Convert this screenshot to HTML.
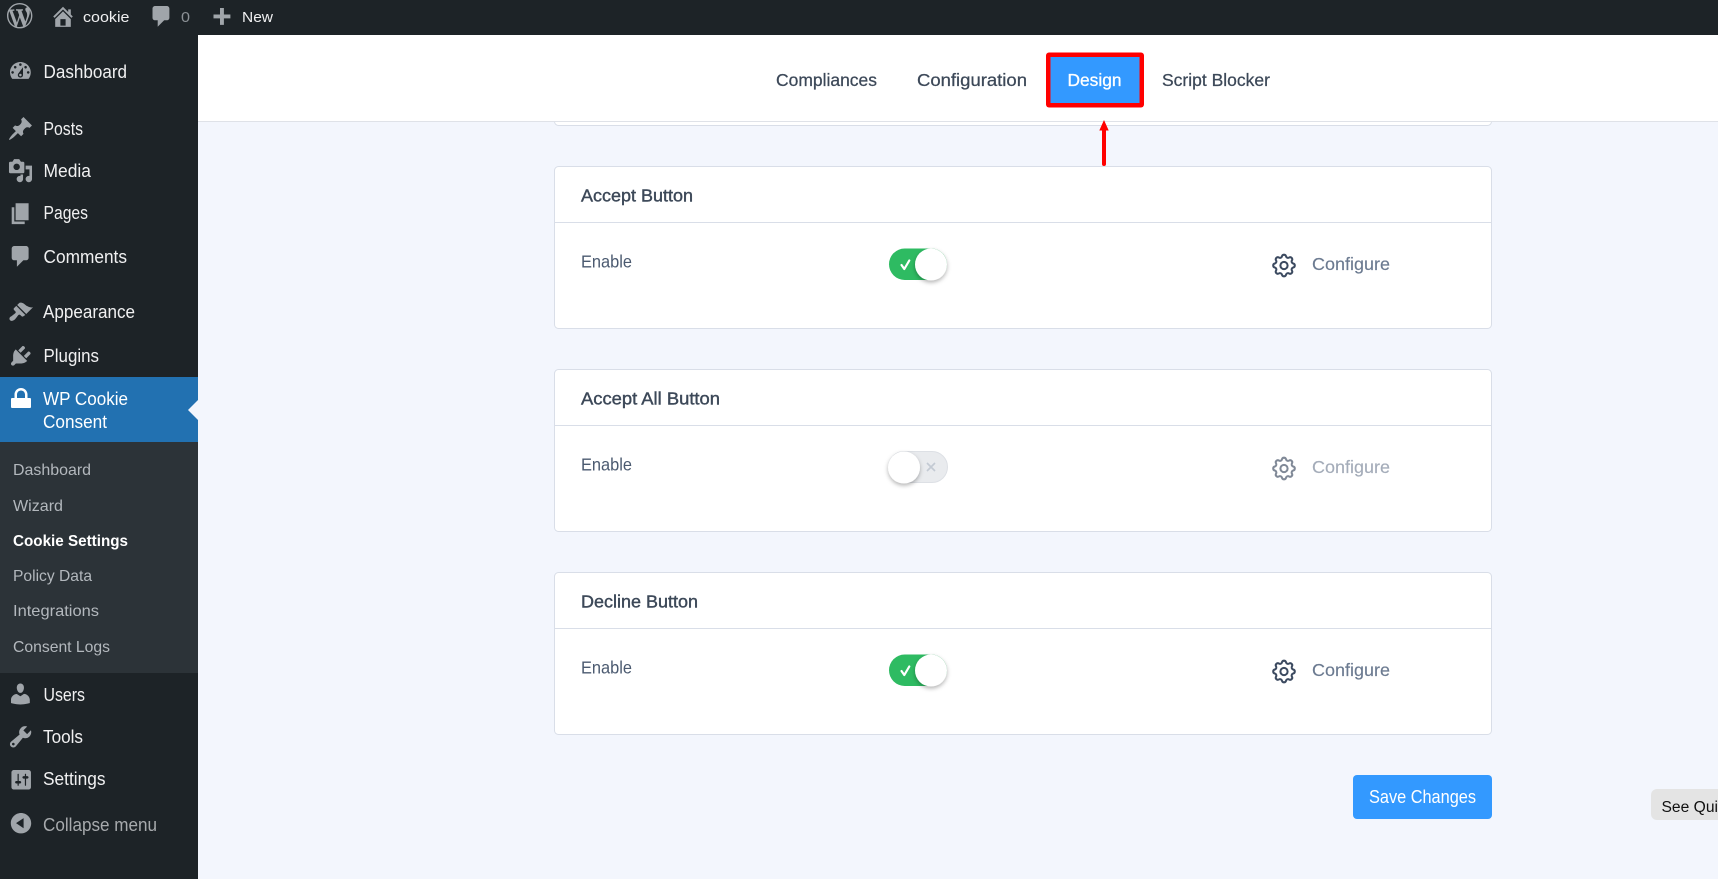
<!DOCTYPE html>
<html><head><meta charset="utf-8"><title>Cookie Settings</title>
<style>
html,body{margin:0;padding:0;width:1718px;height:879px;overflow:hidden;background:#f3f6fd}
svg{display:block}
text{font-family:"Liberation Sans",Arial,sans-serif;white-space:pre}
.a{font-size:18px;fill:#f0f0f1}
.b{font-size:15px;fill:#f0f0f1}
.s{font-size:16px;fill:#b3b8bd}
.n{font-size:17.5px;fill:#3c4858;stroke:#3c4858;stroke-width:.25}
.t{font-size:17.5px;fill:#3c4858;stroke:#3c4858;stroke-width:.4}
.e{font-size:17.5px;fill:#4b5a70}
.c{font-size:17.5px;fill:#6b7a90;stroke:#6b7a90;stroke-width:.15}
.i{fill:#a0a5aa;fill-rule:evenodd}
.card{fill:#fff;stroke:#d9dee8;stroke-width:1}
.ln{stroke:#d9dee8;stroke-width:1}
.gear{fill:none;stroke:#3c4a60;stroke-width:1.7;stroke-linecap:round;stroke-linejoin:round}
</style></head><body>
<svg width="1718" height="879" viewBox="0 0 1718 879" xmlns="http://www.w3.org/2000/svg">
<defs>
<filter id="sh" x="-50%" y="-50%" width="200%" height="200%"><feDropShadow dx="0" dy="2" stdDeviation="2.2" flood-color="#000" flood-opacity=".3"/></filter>
<path id="gearp" d="M10.325 4.317c.426-1.756 2.924-1.756 3.35 0a1.724 1.724 0 002.573 1.066c1.543-.94 3.31.826 2.37 2.37a1.724 1.724 0 001.065 2.572c1.756.426 1.756 2.924 0 3.35a1.724 1.724 0 00-1.066 2.573c.94 1.543-.826 3.31-2.37 2.37a1.724 1.724 0 00-2.572 1.065c-.426 1.756-2.924 1.756-3.35 0a1.724 1.724 0 00-2.573-1.066c-1.543.94-3.31-.826-2.37-2.37a1.724 1.724 0 00-1.065-2.572c-1.756-.426-1.756-2.924 0-3.35a1.724 1.724 0 001.066-2.573c-.94-1.543.826-3.31 2.37-2.37.996.608 2.296.07 2.572-1.065zM15 12a3 3 0 11-6 0 3 3 0 016 0z"/>
</defs>
<rect width="1718" height="879" fill="#f3f6fd"/>

<!-- top card remainder -->
<rect class="card" x="554.5" y="100" width="937" height="25.5" rx="4"/>

<!-- nav -->
<rect x="198" y="35" width="1520" height="86" fill="#fff"/>
<line x1="198" x2="1718" y1="121.5" y2="121.5" stroke="#dfe2e8"/>
<text class="n" x="776" y="86" textLength="101" lengthAdjust="spacingAndGlyphs">Compliances</text>
<text class="n" x="917" y="86" textLength="110" lengthAdjust="spacingAndGlyphs">Configuration</text>
<rect x="1046" y="52.5" width="98" height="55" rx="3" fill="#f00"/>
<rect x="1050.5" y="57" width="89" height="46" fill="#3399ff"/>
<text x="1067.5" y="86" font-size="17.5" fill="#fff" stroke="#fff" stroke-width=".3" textLength="54" lengthAdjust="spacingAndGlyphs">Design</text>
<text class="n" x="1162" y="86" textLength="108" lengthAdjust="spacingAndGlyphs">Script Blocker</text>

<!-- arrow -->
<path d="M1104 120l4.7 10.5h-2.7v33.500a2 2 0 01-4 0v-33.500h-2.700z" fill="#f00"/>

<!-- cards -->
<rect class="card" x="554.5" y="166.5" width="937" height="162" rx="4"/>
<line class="ln" x1="555" x2="1491" y1="222.5" y2="222.5"/>
<text class="t" x="581" y="201.5" textLength="112" lengthAdjust="spacingAndGlyphs">Accept Button</text>
<text class="e" x="581" y="267.500" textLength="51" lengthAdjust="spacingAndGlyphs">Enable</text>
<rect x="889" y="248.5" width="58" height="31.5" rx="15.7" fill="#2ebb62"/>
<path d="M901.5 265l2.800 4 5-8.500" fill="none" stroke="#fff" stroke-width="2.200" stroke-linecap="round" stroke-linejoin="round"/>
<circle cx="931" cy="264.5" r="16" fill="#fff" filter="url(#sh)"/>
<use href="#gearp" class="gear" transform="translate(1269.6 251.1) scale(1.2)"/>
<text class="c" x="1312" y="270" textLength="78" lengthAdjust="spacingAndGlyphs">Configure</text>

<rect class="card" x="554.5" y="369.5" width="937" height="162" rx="4"/>
<line class="ln" x1="555" x2="1491" y1="425.5" y2="425.5"/>
<text class="t" x="581" y="404.5" textLength="139" lengthAdjust="spacingAndGlyphs">Accept All Button</text>
<text class="e" x="581" y="470.5" textLength="51" lengthAdjust="spacingAndGlyphs">Enable</text>
<rect x="888.5" y="451.5" width="59" height="31" rx="15.5" fill="#e9ebee" stroke="#dde0e5"/>
<path d="M927 463l8 8M935 463l-8 8" fill="none" stroke="#c3cad3" stroke-width="1.6"/>
<circle cx="904" cy="467.5" r="16" fill="#fff" filter="url(#sh)"/>
<use href="#gearp" class="gear" opacity=".65" transform="translate(1269.6 454.1) scale(1.2)"/>
<text x="1312" y="473" font-size="17.5" fill="#a4acb9" stroke="#a4acb9" stroke-width=".15" textLength="78" lengthAdjust="spacingAndGlyphs">Configure</text>

<rect class="card" x="554.5" y="572.5" width="937" height="162" rx="4"/>
<line class="ln" x1="555" x2="1491" y1="628.5" y2="628.5"/>
<text class="t" x="581" y="607.5" textLength="117" lengthAdjust="spacingAndGlyphs">Decline Button</text>
<text class="e" x="581" y="673.5" textLength="51" lengthAdjust="spacingAndGlyphs">Enable</text>
<rect x="889" y="654.5" width="58" height="31.5" rx="15.7" fill="#2ebb62"/>
<path d="M901.5 671l2.800 4 5-8.500" fill="none" stroke="#fff" stroke-width="2.200" stroke-linecap="round" stroke-linejoin="round"/>
<circle cx="931" cy="670.5" r="16" fill="#fff" filter="url(#sh)"/>
<use href="#gearp" class="gear" transform="translate(1269.6 657.1) scale(1.2)"/>
<text class="c" x="1312" y="676" textLength="78" lengthAdjust="spacingAndGlyphs">Configure</text>

<!-- save -->
<rect x="1353" y="775" width="139" height="44" rx="4" fill="#3399ff"/>
<text x="1369" y="803" font-size="18" fill="#fff" textLength="107" lengthAdjust="spacingAndGlyphs">Save Changes</text>
<path d="M1718 789h-61a6 6 0 00-6 6v19a6 6 0 006 6h61z" fill="#e4e4e4"/>
<text x="1661.500" y="812" font-size="15.500" fill="#111" textLength="56.500" lengthAdjust="spacingAndGlyphs">See Qui</text>

<!-- sidebar -->
<rect x="0" y="0" width="198" height="879" fill="#1d2327"/>
<rect x="0" y="377" width="198" height="65" fill="#2271b1"/>
<rect x="0" y="442" width="198" height="231" fill="#2c3338"/>
<path d="M198 400l-10 10 10 10z" fill="#f3f6fd"/>

<!-- topbar -->
<rect x="0" y="0" width="1718" height="35" fill="#1d2327"/>
<path class="i" transform="translate(7 3) scale(1.27)" d="M20 10c0-5.51-4.49-10-10-10C4.48 0 0 4.49 0 10c0 5.52 4.48 10 10 10 5.51 0 10-4.48 10-10zM7.78 15.37L4.37 6.22c.55-.02 1.17-.08 1.17-.08.5-.06.44-1.13-.06-1.11 0 0-1.45.11-2.37.11-.18 0-.37 0-.58-.01C4.12 2.69 6.87 1.11 10 1.11c2.33 0 4.45.87 6.05 2.34-.68-.11-1.65.39-1.65 1.58 0 .74.45 1.36.9 2.1.35.61.55 1.36.55 2.46 0 1.49-1.4 5-1.4 5l-3.03-8.37c.54-.02.82-.17.82-.17.5-.05.44-1.25-.06-1.22 0 0-1.44.12-2.38.12-.87 0-2.33-.12-2.33-.12-.5-.03-.56 1.2-.06 1.22l.92.08 1.26 3.41zM17.41 10c.24-.64.74-1.87.43-4.25.7 1.29 1.05 2.71 1.05 4.25 0 3.29-1.73 6.24-4.4 7.78.97-2.59 1.94-5.2 2.92-7.78zM6.1 18.09C3.12 16.65 1.11 13.53 1.11 10c0-1.3.23-2.48.72-3.59C3.25 10.3 4.67 14.2 6.1 18.09zm4.03-6.63l2.58 6.98c-.86.29-1.76.45-2.71.45-.79 0-1.57-.11-2.29-.33.81-2.38 1.62-4.74 2.42-7.1z"/>
<path class="i" transform="translate(50 3.5) scale(1.3)" d="M16 8.5l1.53 1.53-1.06 1.06L10 4.62l-6.47 6.47-1.06-1.06L10 2.5l4 4v-2h2v4zm-6-2.46l6 5.99V18H4v-5.97zM12 17v-5H8v5h4z"/>
<text class="b" x="83" y="22" textLength="46.5" lengthAdjust="spacingAndGlyphs">cookie</text>
<path class="i" transform="translate(148.6 3.4) scale(1.3)" d="M5 2h9c1.1 0 2 .9 2 2v7c0 1.1-.9 2-2 2h-2l-5 5v-5H5c-1.1 0-2-.9-2-2V4c0-1.1.9-2 2-2z"/>
<text x="181" y="22" font-size="15" fill="#8c9196" textLength="9" lengthAdjust="spacingAndGlyphs">0</text>
<path class="i" transform="translate(208.3 5.4) scale(1.3)" d="M17 7v3h-5v5H9v-5H4V7h5V2h3v5h5z"/>
<text class="b" x="242" y="22" textLength="31" lengthAdjust="spacingAndGlyphs">New</text>

<!-- menu -->
<path class="i" transform="translate(7.4 58.1) scale(1.3)" d="M3.76 16h12.48c1.1-1.37 1.76-3.11 1.76-5 0-4.42-3.58-8-8-8s-8 3.58-8 8c0 1.89.66 3.63 1.76 5zM10 4c.55 0 1 .45 1 1s-.45 1-1 1-1-.45-1-1 .45-1 1-1zM6 6c.55 0 1 .45 1 1s-.45 1-1 1-1-.45-1-1 .45-1 1-1zm8 0c.55 0 1 .45 1 1s-.45 1-1 1-1-.45-1-1 .45-1 1-1zm-5.37 5.55L12 7v6c0 1.1-.9 2-2 2s-2-.9-2-2c0-.57.24-1.08.63-1.45zM4 10c.55 0 1 .45 1 1s-.45 1-1 1-1-.45-1-1 .45-1 1-1zm12 0c.55 0 1 .45 1 1s-.45 1-1 1-1-.45-1-1 .45-1 1-1zm-5 3c0-.55-.45-1-1-1s-1 .45-1 1 .45 1 1 1 1-.45 1-1z"/>
<text class="a" x="43.5" y="78" textLength="83.5" lengthAdjust="spacingAndGlyphs">Dashboard</text>
<path class="i" transform="translate(7.2 115.4) scale(1.33)" d="M10.44 3.02l1.82-1.82 6.36 6.35-1.83 1.82c-1.05-.68-2.48-.57-3.41.36l-.75.75c-.92.93-1.04 2.35-.35 3.41l-1.83 1.82-2.41-2.41-2.8 2.79c-.42.42-3.38 2.71-3.8 2.29s1.86-3.39 2.28-3.81l2.79-2.79L4.1 9.36l1.83-1.82c1.05.69 2.48.57 3.4-.36l.75-.75c.93-.92 1.05-2.35.36-3.41z"/>
<text class="a" x="43.5" y="135" textLength="39.5" lengthAdjust="spacingAndGlyphs">Posts</text>
<path class="i" transform="translate(7.7 157.9) scale(1.28)" d="M13 11V4c0-.55-.45-1-1-1h-1.67L9 1H5L3.67 3H2c-.55 0-1 .45-1 1v7c0 .55.45 1 1 1h10c.55 0 1-.45 1-1zM7 4.5c1.38 0 2.5 1.12 2.5 2.5S8.38 9.5 7 9.5 4.5 8.38 4.5 7 5.62 4.5 7 4.5zM14 6h5v10.5c0 1.38-1.12 2.5-2.5 2.5S14 17.88 14 16.5s1.12-2.5 2.5-2.5c.17 0 .34.02.5.05V9h-3V6zm-4 8.05V13h2v3.5c0 1.38-1.12 2.5-2.5 2.5S7 17.88 7 16.5 8.12 14 9.5 14c.17 0 .34.02.5.05z"/>
<text class="a" x="43.5" y="177" textLength="47.5" lengthAdjust="spacingAndGlyphs">Media</text>
<path class="i" transform="translate(7.8 200.7) scale(1.3)" d="M6 15V2h10v13H6zm-1 1h8v2H3V5h2v11z"/>
<text class="a" x="43.5" y="219" textLength="44.5" lengthAdjust="spacingAndGlyphs">Pages</text>
<path class="i" transform="translate(7.8 243.4) scale(1.3)" d="M5 2h9c1.1 0 2 .9 2 2v7c0 1.1-.9 2-2 2h-2l-5 5v-5H5c-1.1 0-2-.9-2-2V4c0-1.1.9-2 2-2z"/>
<text class="a" x="43.5" y="263" textLength="83.5" lengthAdjust="spacingAndGlyphs">Comments</text>
<path class="i" transform="translate(7.7 299.900) scale(1.28)" d="M14.48 11.06L7.41 3.99l1.5-1.5c.5-.56 2.3-.47 3.51.32 1.21.8 1.43 1.28 2.91 2.1 1.18.64 2.45 1.26 4.45.85zm-.71.71L6.7 4.7 4.93 6.47c-.39.39-.39 1.02 0 1.41l1.06 1.06c.39.39.39 1.03 0 1.42-.6.6-1.43 1.11-2.21 1.69-.35.26-.7.53-1.01.84C1.43 13.23.9 14.91 1.87 15.88c.97.97 2.65.44 3.99-.9.31-.31.58-.66.84-1.01.58-.78 1.09-1.61 1.69-2.21.39-.39 1.03-.39 1.42 0l1.06 1.06c.39.39 1.02.39 1.41 0z"/>
<text class="a" x="43" y="318" textLength="92" lengthAdjust="spacingAndGlyphs">Appearance</text>
<path class="i" transform="translate(8 343) scale(1.28)" d="M13.11 4.36L9.87 7.6 8 5.73l3.24-3.24c.35-.34 1.05-.2 1.56.32.52.51.66 1.21.31 1.55zm-8 1.77l.91-1.12 9.01 9.01-1.19.84c-.71.71-2.63 1.16-3.82 1.16H6.14L4.9 17.26c-.59.59-1.54.59-2.12 0-.59-.58-.59-1.53 0-2.12l1.24-1.24v-3.88c0-1.13.4-3.19 1.09-3.89zm7.26 3.97l3.24-3.24c.34-.35 1.04-.21 1.55.31.52.51.66 1.21.31 1.55l-3.24 3.25z"/>
<text class="a" x="43.5" y="362" textLength="55.500" lengthAdjust="spacingAndGlyphs">Plugins</text>
<path fill="#fff" fill-rule="evenodd" d="M12 398h2.500v-3.500c0-3.600 2.900-6.500 6.500-6.500s6.500 2.900 6.500 6.500V398H30a1 1 0 011 1v8a1 1 0 01-1 1H12a1 1 0 01-1-1v-8a1 1 0 011-1zm5 0h8v-3.500c0-2.200-1.800-4-4-4s-4 1.800-4 4z"/>
<text x="43" y="405" font-size="18" fill="#fff" textLength="85" lengthAdjust="spacingAndGlyphs">WP Cookie</text>
<text x="43" y="428" font-size="18" fill="#fff" textLength="64" lengthAdjust="spacingAndGlyphs">Consent</text>

<text class="s" x="13" y="475" textLength="78" lengthAdjust="spacingAndGlyphs">Dashboard</text>
<text class="s" x="13" y="511" textLength="50" lengthAdjust="spacingAndGlyphs">Wizard</text>
<text x="13" y="546" font-size="16" font-weight="700" fill="#fff" textLength="115" lengthAdjust="spacingAndGlyphs">Cookie Settings</text>
<text class="s" x="13" y="581" textLength="79" lengthAdjust="spacingAndGlyphs">Policy Data</text>
<text class="s" x="13" y="616" textLength="86" lengthAdjust="spacingAndGlyphs">Integrations</text>
<text class="s" x="13" y="652" textLength="97" lengthAdjust="spacingAndGlyphs">Consent Logs</text>

<path class="i" transform="translate(7.4 680.900) scale(1.3)" d="M10 9.25c-2.27 0-2.73-3.44-2.73-3.44C7 4.02 7.82 2 9.97 2c2.16 0 2.98 2.02 2.71 3.81 0 0-.41 3.44-2.68 3.44zm0 2.57L12.72 10c2.39 0 4.52 2.33 4.52 4.53v2.49s-3.65 1.13-7.24 1.13c-3.65 0-7.24-1.13-7.24-1.13v-2.49c0-2.25 1.94-4.48 4.47-4.48z"/>
<text class="a" x="43.5" y="701" textLength="41.5" lengthAdjust="spacingAndGlyphs">Users</text>
<path class="i" transform="translate(7.3 723.5) scale(1.33)" d="M16.68 9.77c-1.34 1.34-3.3 1.67-4.95.99l-5.41 6.52c-.99.99-2.59.99-3.58 0s-.99-2.59 0-3.57l6.52-5.42c-.68-1.65-.35-3.61.99-4.95 1.28-1.28 3.12-1.62 4.72-1.06l-2.89 2.89 2.82 2.82 2.86-2.87c.53 1.58.18 3.39-1.08 4.65zM3.81 16.21c.4.39 1.04.39 1.43 0 .4-.4.4-1.04 0-1.43-.39-.4-1.03-.4-1.43 0-.39.39-.39 1.03 0 1.43z"/>
<text class="a" x="43" y="743" textLength="40" lengthAdjust="spacingAndGlyphs">Tools</text>
<path class="i" transform="translate(9 767.6) scale(1.22)" d="M18 16V4c0-1.1-.9-2-2-2H4c-1.1 0-2 .9-2 2v12c0 1.1.9 2 2 2h12c1.1 0 2-.9 2-2zM8 11h1c.55 0 1 .45 1 1s-.45 1-1 1H8v1.5c0 .28-.22.5-.5.5s-.5-.22-.5-.5V13H6c-.55 0-1-.45-1-1s.45-1 1-1h1V5.5c0-.28.22-.5.5-.5s.5.22.5.5V11zm5-2h-1c-.55 0-1-.45-1-1s.45-1 1-1h1V5.5c0-.28.22-.5.5-.5s.5.22.5.5V7h1c.55 0 1 .45 1 1s-.45 1-1 1h-1v5.5c0 .28-.22.5-.5.5s-.5-.22-.5-.5V9z"/>
<text class="a" x="43" y="785" textLength="62.5" lengthAdjust="spacingAndGlyphs">Settings</text>
<path class="i" transform="translate(8 810.200) scale(1.3)" d="M10 2.16c4.33 0 7.84 3.51 7.84 7.84s-3.51 7.84-7.84 7.84S2.16 14.33 2.16 10 5.71 2.16 10 2.16zm2 11.72V6.12L6.18 9.97z"/>
<text x="43" y="831" font-size="18" fill="#a7aaad" textLength="114" lengthAdjust="spacingAndGlyphs">Collapse menu</text>
</svg>
</body></html>
